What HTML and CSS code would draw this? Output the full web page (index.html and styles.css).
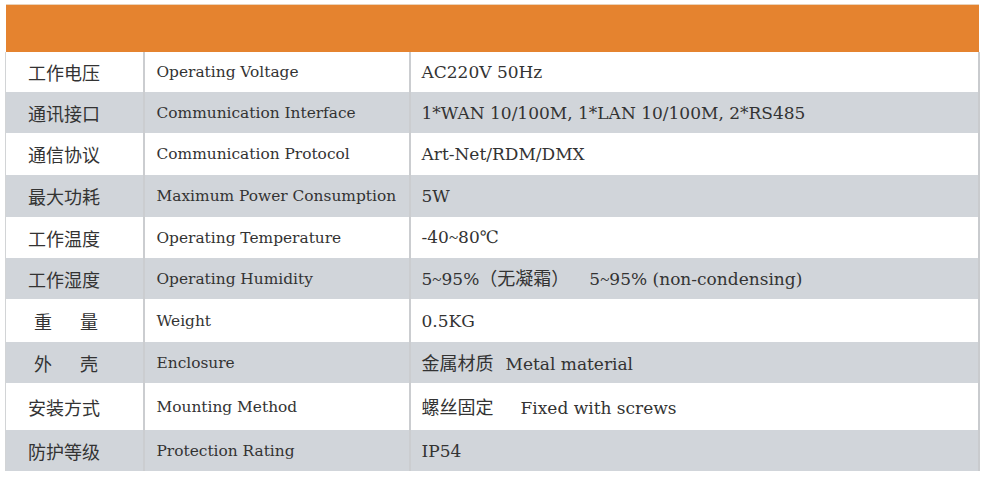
FILE: index.html
```html
<!DOCTYPE html>
<html>
<head>
<meta charset="utf-8">
<link rel="stylesheet" href="styles.css">
</head>
<body>
<div class="sheet">
  <table class="spec">
    <colgroup>
      <col class="c1">
      <col class="c2">
      <col class="c3">
    </colgroup>
    <thead>
      <tr class="head"><th colspan="3"></th></tr>
    </thead>
    <tbody>
      <tr class="r h40"><td class="zh">工作电压</td><td class="en">Operating Voltage</td><td class="val">AC220V 50Hz</td></tr>
      <tr class="r g h41"><td class="zh">通讯接口</td><td class="en">Communication Interface</td><td class="val">1*WAN 10/100M, 1*LAN 10/100M, 2*RS485</td></tr>
      <tr class="r h42"><td class="zh">通信协议</td><td class="en">Communication Protocol</td><td class="val">Art-Net/RDM/DMX</td></tr>
      <tr class="r g h42"><td class="zh">最大功耗</td><td class="en">Maximum Power Consumption</td><td class="val">5W</td></tr>
      <tr class="r h41"><td class="zh">工作温度</td><td class="en">Operating Temperature</td><td class="val">-40<span class="tilde">~</span>80℃</td></tr>
      <tr class="r g h41"><td class="zh">工作湿度</td><td class="en">Operating Humidity</td><td class="val">5<span class="tilde">~</span>95%<span class="cjk">（无凝霜）</span><span class="gap-m"></span>5<span class="tilde">~</span>95% (non-condensing)</td></tr>
      <tr class="r h43"><td class="zh"><span class="spread">重量</span></td><td class="en">Weight</td><td class="val">0.5KG</td></tr>
      <tr class="r g h41"><td class="zh"><span class="spread">外壳</span></td><td class="en">Enclosure</td><td class="val"><span class="cjk">金属材质</span><span class="gap-s"></span>Metal material</td></tr>
      <tr class="r h47"><td class="zh">安装方式</td><td class="en">Mounting Method</td><td class="val"><span class="cjk">螺丝固定</span><span class="gap-l"></span>Fixed with screws</td></tr>
      <tr class="r g h41 last"><td class="zh">防护等级</td><td class="en">Protection Rating</td><td class="val">IP54</td></tr>
    </tbody>
  </table>
</div>
</body>
</html>
```
FILE: styles.css
```css
html, body {
  margin: 0;
  padding: 0;
  background: #ffffff;
}

.sheet {
  padding: 4px 13px 0 5px;
}

.spec {
  width: 973px;
  border-collapse: collapse;
  table-layout: fixed;
  color: #333333;
}

.c1 { width: 138px; }
.c2 { width: 266px; }
.c3 { width: 569px; }

.head th {
  height: 47px;
  padding: 0;
  background: #e5832f;
  border-top: 1px solid #ead2b8;
}

.r td {
  padding: 0;
  vertical-align: middle;
  border-left: 2px solid #cbcdd0;
  white-space: nowrap;
  overflow: hidden;
  line-height: 20px;
}

.r td:first-child {
  border-left: 1px solid #d2d4d6;
}

.r td:last-child {
  border-right: 2px solid #c9cbce;
}

.g td {
  background: #d1d5da;
}

.h40 td { height: 40px; }
.h41 td { height: 41px; }
.h42 td { height: 42px; }
.h43 td { height: 43px; }
.h47 td { height: 47px; }

.zh {
  padding-left: 22px !important;
  font-family: "Noto Sans CJK SC", sans-serif;
  font-size: 18px;
  font-weight: 400;
  color: #333;
}

.en {
  padding-left: 12px !important;
  font-family: "DejaVu Serif", serif;
  font-size: 15.4px;
  color: #333;
}

.val {
  padding-left: 11px !important;
  font-family: "DejaVu Serif", serif;
  font-size: 17px;
  color: #333;
}

.cjk {
  font-family: "Noto Sans CJK SC", sans-serif;
  font-size: 18px;
}

.tilde {
  font-family: "Liberation Serif", serif;
  font-size: 17px;
}

.spread {
  display: inline-block;
  padding-left: 6px;
  letter-spacing: 28px;
}

.gap-s {
  display: inline-block;
  width: 12px;
}

.gap-m {
  display: inline-block;
  width: 20px;
}

.gap-l {
  display: inline-block;
  width: 27px;
}
```
